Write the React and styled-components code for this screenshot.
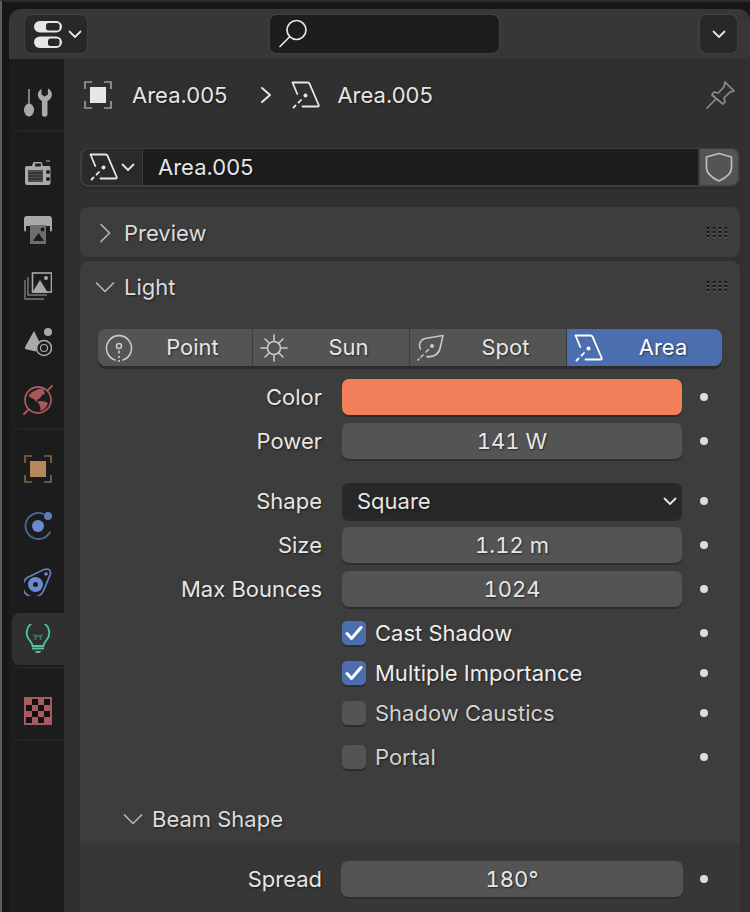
import styled, { createGlobalStyle } from "styled-components";

const GlobalStyle = createGlobalStyle`
  html, body { margin: 0; padding: 0; background: #171717; }
  * { box-sizing: border-box; }
`;

const Page = styled.div`
  width: 750px;
  height: 912px;
  overflow: hidden;
  padding: 7px 0 0 7px;
  background: #171717;
  border-left: 2px solid #5b6361;
  border-top: 2px solid #2b2b2b;
  font-family: Inter, "Noto Sans", sans-serif;
  font-size: 22px;
  color: #e6e6e6;
  text-shadow: 1px 1px 2px rgba(0, 0, 0, 0.55);
`;

const Editor = styled.div`
  width: 741px;
  height: 903px;
  border-radius: 12px 12px 0 0;
  overflow: hidden;
  background: #303030;
`;

const Header = styled.div`
  height: 50px;
  display: flex;
  align-items: center;
  background: #373737;
  padding: 0 13px 0 16px;
`;

const HeaderButton = styled.div`
  width: ${(p) => p.$w}px;
  height: 38px;
  padding-left: ${(p) => p.$pad}px;
  border-radius: 7px;
  display: flex;
  align-items: center;
  gap: 5px;
  background: #282828;
  box-shadow: 0 0 0 1.5px #3f3f3f;
`;

const Search = styled.div`
  width: 229px;
  height: 38px;
  margin-left: 183px;
  margin-right: auto;
  padding-left: 8px;
  border-radius: 7px;
  display: flex;
  align-items: center;
  background: #1d1d1d;
  box-shadow: 0 0 0 1.5px #3f3f3f;
`;

const Body = styled.div`
  display: flex;
  height: 853px;
`;

const Sidebar = styled.div`
  width: 55px;
  flex-shrink: 0;
  background: #1c1c1c;
  display: flex;
  flex-direction: column;
  padding-left: 3px;
`;

const TabGroup = styled.div`
  display: flex;
  flex-direction: column;
  padding-top: ${(p) => p.$top}px;
  border-bottom: 2px solid #232323;
  border-bottom-left-radius: 8px;
`;

const Tab = styled.div`
  height: ${(p) => (p.$active ? 52 : p.$h || 56.6)}px;
  margin: ${(p) => (p.$active ? "2.3px 0" : "0")};
  display: flex;
  align-items: center;
  justify-content: center;
  border-radius: 8px 0 0 8px;
  background: ${(p) => (p.$active ? "#303030" : "transparent")};
`;

const Main = styled.div`
  flex: 1;
  padding: 0 10px 0 16px;
  display: flex;
  flex-direction: column;
`;

const Breadcrumb = styled.div`
  height: 72px;
  display: flex;
  align-items: center;
  padding: 0 4px;
  flex-shrink: 0;
`;

const CrumbName = styled.span`
  margin: 0 ${(p) => p.$right || 0}px 0 ${(p) => p.$left || 0}px;
`;

const CrumbArrow = styled.div`
  margin-right: 17px;
  display: flex;
`;

const Pin = styled.div`
  margin-left: auto;
  display: flex;
`;

const NameField = styled.div`
  margin-top: 17px;
  height: 39px;
  display: flex;
  gap: 1px;
  padding: 1px 2px 2px;
  border-radius: 8px;
  background: #3d3d3d;
  box-shadow: 0 2px 0 #292929;
  flex-shrink: 0;
`;

const DataPicker = styled.div`
  width: 60px;
  border-radius: 7px 0 0 7px;
  display: flex;
  align-items: center;
  justify-content: center;
  gap: 2px;
  background: #2a2a2a;
`;

const NameInput = styled.div`
  flex: 1;
  padding-left: 15px;
  display: flex;
  align-items: center;
  background: #1d1d1d;
`;

const Shield = styled.div`
  width: 38px;
  margin-left: 1px;
  border-radius: 0 7px 7px 0;
  display: flex;
  align-items: center;
  justify-content: center;
  background: #545454;
`;

const Panel = styled.div`
  margin-top: ${(p) => p.$top}px;
  background: #3d3d3d;
  flex-shrink: ${(p) => (p.$grow ? 1 : 0)};
  flex-grow: ${(p) => (p.$grow ? 1 : 0)};
  border-radius: ${(p) => (p.$grow ? "8px 8px 0 0" : "8px")};
  overflow: hidden;
`;

const PanelHeader = styled.div`
  height: 50px;
  display: flex;
  align-items: center;
  gap: 9px;
  padding: 2px 13px 0 15px;
  color: #dcdcdc;
`;

const Grip = styled.div`
  margin-left: auto;
  margin-top: -2px;
  display: grid;
  grid-template-columns: repeat(4, 2px);
  gap: 2px 4px;
  & > i {
    width: 2px;
    height: 2px;
    background: #111;
    box-shadow: 0 1px 0 #636363;
  }
`;

const LightTypes = styled.div`
  margin: 18px 18px 0;
  height: 37px;
  display: grid;
  grid-template-columns: 154px 156px 156px 155px;
  gap: 1px;
  border-radius: 8px;
  box-shadow: 0 3px 0 #2c2c2c;
`;

const TypeButton = styled.div`
  display: flex;
  align-items: center;
  padding-left: 7px;
  background: ${(p) => (p.$active ? "#4b6fae" : "#545454")};
  color: ${(p) => (p.$active ? "#ffffff" : "#e6e6e6")};
  &:first-child { border-radius: 8px 0 0 8px; }
  &:last-child { border-radius: 0 8px 8px 0; }
`;

const TypeLabel = styled.span`
  flex: 1;
  text-align: center;
  padding-bottom: 2px;
`;

const Rows = styled.div`
  margin-top: 13px;
  display: flex;
  flex-direction: column;
`;

const Row = styled.div`
  display: grid;
  grid-template-columns: 242px 340px 1fr;
  column-gap: 20px;
  align-items: center;
  height: 36px;
  margin-bottom: ${(p) => p.$after ?? 8}px;
`;

const Label = styled.div`
  text-align: right;
`;

const Dot = styled.div`
  width: 8px;
  height: 8px;
  margin-left: -2px;
  border-radius: 50%;
  background: #dcdcdc;
  justify-self: start;
`;

const Swatch = styled.div`
  height: 36px;
  border-radius: 7px;
  background: #f1805a;
  box-shadow: 0 2px 0 #2c2c2c;
`;

const NumberField = styled.div`
  height: 36px;
  border-radius: 7px;
  display: flex;
  align-items: center;
  justify-content: center;
  font-variant-numeric: tabular-nums;
  background: #545454;
  box-shadow: 0 2px 0 #2c2c2c;
`;

const WideField = styled(NumberField)`
  margin: 0 -1px;
`;

const Select = styled.div`
  height: 36px;
  border-radius: 7px;
  padding: 0 5px 0 15px;
  display: flex;
  align-items: center;
  justify-content: space-between;
  background: #282828;
  box-shadow: 0 2px 0 #2c2c2c;
`;

const CheckRow = styled.div`
  display: grid;
  grid-template-columns: 242px 340px 1fr;
  column-gap: 20px;
  align-items: center;
  height: 24px;
  margin-bottom: ${(p) => p.$after}px;
`;

const CheckCell = styled.div`
  grid-column: 2;
  display: flex;
  align-items: center;
  gap: 9px;
  color: ${(p) => (p.$on ? "#ededed" : "#d2d2d2")};
`;

const Box = styled.div`
  width: 24px;
  height: 24px;
  border-radius: 5px;
  display: flex;
  align-items: center;
  justify-content: center;
  background: ${(p) => (p.$on ? "#4b6fae" : "#545454")};
  box-shadow: 0 2px 0 #2c2c2c;
`;

const SubHeader = styled.div`
  height: 48px;
  margin-top: 27px;
  display: flex;
  align-items: center;
  gap: 9px;
  padding-left: 43px;
  color: #dcdcdc;
`;

const SubBody = styled.div`
  background: #373737;
  padding-top: 18px;
  height: 80px;
`;

const Svg = ({ w, h, vb, children }) => (
  <svg width={w} height={h} viewBox={vb || `0 0 ${w} ${h}`} fill="none" style={{ flexShrink: 0, display: "block" }}>
    {children}
  </svg>
);

const Chevron = ({ size = 14, color = "#e6e6e6", sw = 1.8 }) => (
  <Svg w={size} h={size} vb="0 0 14 14">
    <path d="M1.5 4.5 7 10l5.500-5.500" stroke={color} strokeWidth={sw} strokeLinecap="round" strokeLinejoin="round" />
  </Svg>
);

const PanelArrow = ({ open }) => (
  <Svg w={20} h={20} vb="0 0 20 20">
    <path
      d={open ? "M1.500 6l8.500 8.500L18.500 6" : "M6 1.500l8.500 8.500L6 18.500"}
      stroke="#b4b4b4"
      strokeWidth="1.700"
      strokeLinecap="round"
      strokeLinejoin="round"
    />
  </Svg>
);

const AreaIcon = ({ color = "#e6e6e6" }) => (
  <Svg w={30} h={28} vb="0 0 30 28">
    <path
      d="M1.500 1.500h15q1.500 0 2 1.200l9.200 21.300q.6 1.500-1.200 1.500H11.500M1.500 1.500l4.800 11.500"
      stroke={color}
      strokeWidth="1.800"
      strokeLinecap="round"
      strokeLinejoin="round"
    />
    <circle cx="14.500" cy="14.500" r="2" fill={color} />
    <path d="M10 19l-2.500 2.700M4.500 24.500L2.500 26.500" stroke={color} strokeWidth="1.800" strokeLinecap="round" />
  </Svg>
);

const TOOL = "#a9a9a9";

const ToolIcon = () => (
  <Svg w={28} h={30} vb="0 0 28 30">
    <path d="M5 2v15" stroke={TOOL} strokeWidth="1.400" />
    <ellipse cx="5" cy="23" rx="5" ry="6.500" fill={TOOL} />
    <path
      d="M17.500 1.500v6l3.200 2 3.200-2v-6c3 1.500 4.400 4 3.900 7-.4 2.500-2 4.500-4.300 5.500v13a2.800 2.800 0 0 1-5.600 0V14c-2-1-3.700-3-4-5.500-.4-3 1.300-5.500 4.600-7z"
      fill={TOOL}
    />
  </Svg>
);

const RenderIcon = () => (
  <Svg w={28} h={26} vb="0 0 28 26">
    <path d="M1 8q0-2 2-2h5l1-3q.3-1 1.500-1h6q1.200 0 1.500 1l1 3h6q1.500 0 1.500 2v15q0 2-2 2H3q-2 0-2-2z" fill={TOOL} />
    <rect x="11" y="3.500" width="6" height="3" rx="1" fill="#1c1c1c" />
    <rect x="4" y="10" width="15" height="12" fill="#4e4e4e" />
    <path d="M5 13h13M5 16h13M5 19h13" stroke="#1c1c1c" strokeWidth="1" />
    <circle cx="24" cy="12" r="2" fill="#1c1c1c" />
    <circle cx="24" cy="19" r="2" fill="#1c1c1c" />
    <path d="M22 1h4" stroke={TOOL} strokeWidth="1.200" />
  </Svg>
);

const OutputIcon = () => (
  <Svg w={28} h={28} vb="0 0 28 28">
    <path d="M3 0h22q3 0 3 3v11q0 1.500-2 1.500V10H2v5.500Q0 15.500 0 14V3q0-3 3-3z" fill={TOOL} />
    <path d="M0 3h28v7H0z" fill={TOOL} />
    <path d="M6 9h16v19H6z" fill="#6e6e6e" />
    <path d="M9 25l5.500-8 5.500 8z" fill="#1c1c1c" />
    <circle cx="18.500" cy="13.500" r="2" fill="#1c1c1c" />
  </Svg>
);

const ViewLayerIcon = () => (
  <Svg w={28} h={28} vb="0 0 28 28">
    <path d="M1 8v19h19M4 5v18h19" stroke="#7a7a7a" strokeWidth="1.400" />
    <rect x="8.500" y="1" width="19" height="19" stroke={TOOL} strokeWidth="1.600" />
    <path d="M8 21l8-13 8 13z" fill={TOOL} />
    <circle cx="22" cy="6" r="2" fill={TOOL} />
  </Svg>
);

const SceneIcon = () => (
  <Svg w={28} h={30} vb="0 0 28 30">
    <path d="M10 3L1 19q-.6 2 2 2.500l9 2c0-4 1.500-7 4-8.500z" fill={TOOL} />
    <circle cx="24" cy="4" r="4" fill={TOOL} />
    <circle cx="20" cy="20" r="7.500" stroke={TOOL} strokeWidth="1.600" />
    <circle cx="20" cy="20" r="3.500" stroke={TOOL} strokeWidth="1.200" />
  </Svg>
);

const WORLD = "#a8585c";

const WorldIcon = () => (
  <Svg w={30} h={30} vb="0 0 30 30">
    <circle cx="15" cy="15" r="13" stroke={WORLD} strokeWidth="1.800" />
    <path d="M1 29l4-4M25 5l4-4" stroke={WORLD} strokeWidth="1.800" strokeLinecap="round" />
    <path
      d="M6 10Q11 4 20 3.500L22 9Q18 9.500 17 13.500 14 13.500 13.500 17 10 13 6 11.500zM14 16.500Q20 15 25 18 23 24.500 17.500 26 18 20.500 14 16.500z"
      fill={WORLD}
    />
  </Svg>
);

const ObjectIcon = ({ fill = "#b5875a", bracket = "#7f6347" }) => (
  <Svg w={28} h={28} vb="0 0 28 28">
    <path d="M1 8V1h7M20 1h7v7M27 20v7h-7M8 27H1v-7" stroke={bracket} strokeWidth="1.700" />
    <rect x="6" y="6" width="16" height="16" fill={fill} />
  </Svg>
);

const PhysicsIcon = () => (
  <Svg w={28} h={28} vb="0 0 28 28">
    <path d="M19 1.800A13 13 0 1 0 26 20" stroke="#4c6796" strokeWidth="1.800" strokeLinecap="round" />
    <circle cx="14" cy="14" r="6" fill="#6a8bd2" />
    <circle cx="24" cy="4" r="4" fill="#5d79b8" />
  </Svg>
);

const ConstraintIcon = () => (
  <Svg w={28} h={28} vb="0 0 28 28">
    <path d="M3.500 9.500L20 1.500Q27-.5 26.500 6L20 21.500A10.800 10.800 0 1 1 3.500 9.500z" stroke="#5f80c4" strokeWidth="1.800" />
    <circle cx="11.500" cy="16.500" r="7.500" fill="#6a8bd2" />
    <circle cx="11.500" cy="16.500" r="2.500" fill="#1c1c1c" />
    <circle cx="22" cy="6" r="1.800" fill="#6a8bd2" />
  </Svg>
);

const BulbIcon = () => (
  <Svg w={26} h={30} vb="0 0 26 30">
    <path
      d="M7.500 22c0-3-1.500-4-3.500-6.500a11.300 11.300 0 1 1 18 0c-2 2.500-3.500 3.500-3.500 6.500z"
      stroke="#4fc79a"
      strokeWidth="1.800"
      strokeLinejoin="round"
    />
    <path d="M8.500 10.500l2 1.500h5l2-1.500M10.500 12.500v3.500M15.500 12.500v3.500" stroke="#2e8a68" strokeWidth="1.500" />
    <path d="M7 24.500h12" stroke="#4fc79a" strokeWidth="2" />
    <path d="M9.500 27h7l-2 2h-3z" fill="#4fc79a" />
  </Svg>
);

const CheckerIcon = () => (
  <Svg w={28} h={28} vb="0 0 28 28">
    <rect width="28" height="28" fill="#a85a62" />
    {[0, 1, 2, 3].flatMap((r) =>
      [0, 1, 2, 3].map((c) =>
        (r + c) % 2 === 1 ? <rect key={`${r}-${c}`} x={2 + c * 6} y={2 + r * 6} width="6" height="6" fill="#111" /> : null
      )
    )}
  </Svg>
);

const PointIcon = () => (
  <Svg w={28} h={30} vb="0 0 28 30">
    <path d="M10 27a12.500 12.500 0 1 1 8 0" stroke="#c8c8c8" strokeWidth="1.600" strokeLinecap="round" />
    <circle cx="14" cy="13" r="2.500" stroke="#c8c8c8" strokeWidth="1.600" />
    <path d="M14 17.500v3M14 23v2M14 27v2" stroke="#c8c8c8" strokeWidth="1.600" />
  </Svg>
);

const SunIcon = () => (
  <Svg w={28} h={28} vb="0 0 28 28">
    <circle cx="14" cy="14" r="6.500" stroke="#c8c8c8" strokeWidth="1.600" />
    <path
      d="M14 1v6M14 21v6M1 14h6M21 14h6M5 5l4 4M19 19l4 4M23 5l-4 4M9 19l-4 4"
      stroke="#c8c8c8"
      strokeWidth="1.600"
      strokeLinecap="round"
    />
  </Svg>
);

const SpotIcon = () => (
  <Svg w={28} h={28} vb="0 0 28 28">
    <path
      d="M26 1.500L8 4.500C3 6 1 11 3.500 15M26 1.500l-3 13c-1 5-6 9-13 8M13 23h-3"
      stroke="#c8c8c8"
      strokeWidth="1.600"
      strokeLinecap="round"
      strokeLinejoin="round"
    />
    <circle cx="15" cy="12" r="2" fill="#c8c8c8" />
    <path d="M11.500 15.500l-2.500 2.500M6 21l-2 2M2 25l-1 1" stroke="#c8c8c8" strokeWidth="1.600" strokeLinecap="round" />
  </Svg>
);

const CheckMark = () => (
  <Svg w={18} h={16} vb="0 0 18 16">
    <path d="M2 8.500l4.500 5L16 2.500" stroke="#fff" strokeWidth="3" strokeLinecap="round" strokeLinejoin="round" />
  </Svg>
);

const App = () => {
  const grip = Array.from({ length: 12 }).map((_, i) => <i key={i} />);

  return (
    <Page>
      <GlobalStyle />
      <Editor>
        <Header>
          <HeaderButton $w={62} $pad={8}>
            <Svg w={30} h={29} vb="0 0 30 29">
              <rect x="1" y="1" width="28" height="11.500" rx="5.700" fill="#e6e6e6" />
              <rect x="13" y="3" width="13.500" height="7.500" rx="2.500" fill="#282828" />
              <rect x="1" y="16.500" width="28" height="11.500" rx="5.700" fill="#e6e6e6" />
              <rect x="15" y="18.500" width="11.500" height="7.500" rx="2.500" fill="#282828" />
            </Svg>
            <Chevron />
          </HeaderButton>
          <Search>
            <Svg w={30} h={30} vb="0 0 30 30">
              <circle cx="18.500" cy="11" r="9.500" stroke="#e6e6e6" strokeWidth="1.700" />
              <path d="M11.500 18L2 27.500" stroke="#e6e6e6" strokeWidth="1.700" strokeLinecap="round" />
            </Svg>
          </Search>
          <HeaderButton $w={37} $pad={11.500}>
            <Chevron />
          </HeaderButton>
        </Header>
        <Body>
          <Sidebar>
            <TabGroup $top={15}>
              <Tab $h={56}>
                <ToolIcon />
              </Tab>
            </TabGroup>
            <TabGroup $top={13}>
              <Tab>
                <RenderIcon />
              </Tab>
              <Tab>
                <OutputIcon />
              </Tab>
              <Tab>
                <ViewLayerIcon />
              </Tab>
              <Tab>
                <SceneIcon />
              </Tab>
              <Tab>
                <WorldIcon />
              </Tab>
            </TabGroup>
            <TabGroup $top={11}>
              <Tab>
                <ObjectIcon />
              </Tab>
              <Tab>
                <PhysicsIcon />
              </Tab>
              <Tab>
                <ConstraintIcon />
              </Tab>
              <Tab $active>
                <BulbIcon />
              </Tab>
            </TabGroup>
            <TabGroup $top={13}>
              <Tab>
                <CheckerIcon />
              </Tab>
            </TabGroup>
          </Sidebar>
          <Main>
            <Breadcrumb>
              <ObjectIcon fill="#e6e6e6" bracket="#9a9a9a" />
              <CrumbName $left={20} $right={33}>
                Area.005
              </CrumbName>
              <CrumbArrow>
                <Svg w={14} h={18} vb="0 0 14 18">
                  <path d="M2 2l8 7-8 7" stroke="#e6e6e6" strokeWidth="2" strokeLinecap="round" strokeLinejoin="round" />
                </Svg>
              </CrumbArrow>
              <AreaIcon />
              <CrumbName $left={16}>Area.005</CrumbName>
              <Pin>
                <Svg w={30} h={30} vb="0 0 30 30">
                  <path
                    d="M1 28l9-9M19 2l9 9-4 1-6 6 1 4-2 2-5-4-6-5 2-3 4 1 6-6z"
                    stroke="#8c8c8c"
                    strokeWidth="1.700"
                    strokeLinejoin="round"
                    strokeLinecap="round"
                  />
                </Svg>
              </Pin>
            </Breadcrumb>
            <NameField>
              <DataPicker>
                <AreaIcon />
                <Chevron />
              </DataPicker>
              <NameInput>Area.005</NameInput>
              <Shield>
                <Svg w={28} h={30} vb="0 0 28 30">
                  <path
                    d="M14 1.500L26.500 5v11c0 6-6 10-12.500 13C7.500 26 1.500 22 1.500 16V5z"
                    stroke="#bdbdbd"
                    strokeWidth="1.700"
                    strokeLinejoin="round"
                  />
                </Svg>
              </Shield>
            </NameField>
            <Panel $top={20}>
              <PanelHeader>
                <PanelArrow />
                Preview
                <Grip>{grip}</Grip>
              </PanelHeader>
            </Panel>
            <Panel $top={4} $grow>
              <PanelHeader>
                <PanelArrow open />
                Light
                <Grip>{grip}</Grip>
              </PanelHeader>
              <LightTypes>
                <TypeButton>
                  <PointIcon />
                  <TypeLabel>Point</TypeLabel>
                </TypeButton>
                <TypeButton>
                  <SunIcon />
                  <TypeLabel>Sun</TypeLabel>
                </TypeButton>
                <TypeButton>
                  <SpotIcon />
                  <TypeLabel>Spot</TypeLabel>
                </TypeButton>
                <TypeButton $active>
                  <AreaIcon color="#ffffff" />
                  <TypeLabel>Area</TypeLabel>
                </TypeButton>
              </LightTypes>
              <Rows>
                <Row>
                  <Label>Color</Label>
                  <Swatch />
                  <Dot />
                </Row>
                <Row $after={24}>
                  <Label>Power</Label>
                  <NumberField>141 W</NumberField>
                  <Dot />
                </Row>
                <Row>
                  <Label>Shape</Label>
                  <Select>
                    Square
                    <Chevron />
                  </Select>
                  <Dot />
                </Row>
                <Row>
                  <Label>Size</Label>
                  <NumberField>1.12 m</NumberField>
                  <Dot />
                </Row>
                <Row $after={13}>
                  <Label>Max Bounces</Label>
                  <NumberField>1024</NumberField>
                  <Dot />
                </Row>
                <CheckRow $after={16}>
                  <CheckCell $on>
                    <Box $on>
                      <CheckMark />
                    </Box>
                    Cast Shadow
                  </CheckCell>
                  <Dot />
                </CheckRow>
                <CheckRow $after={16}>
                  <CheckCell $on>
                    <Box $on>
                      <CheckMark />
                    </Box>
                    Multiple Importance
                  </CheckCell>
                  <Dot />
                </CheckRow>
                <CheckRow $after={20}>
                  <CheckCell>
                    <Box />
                    Shadow Caustics
                  </CheckCell>
                  <Dot />
                </CheckRow>
                <CheckRow $after={0}>
                  <CheckCell>
                    <Box />
                    Portal
                  </CheckCell>
                  <Dot />
                </CheckRow>
              </Rows>
              <SubHeader>
                <PanelArrow open />
                Beam Shape
              </SubHeader>
              <SubBody>
                <Row $after={0}>
                  <Label>Spread</Label>
                  <WideField>180°</WideField>
                  <Dot />
                </Row>
              </SubBody>
            </Panel>
          </Main>
        </Body>
      </Editor>
    </Page>
  );
};

export default App;
